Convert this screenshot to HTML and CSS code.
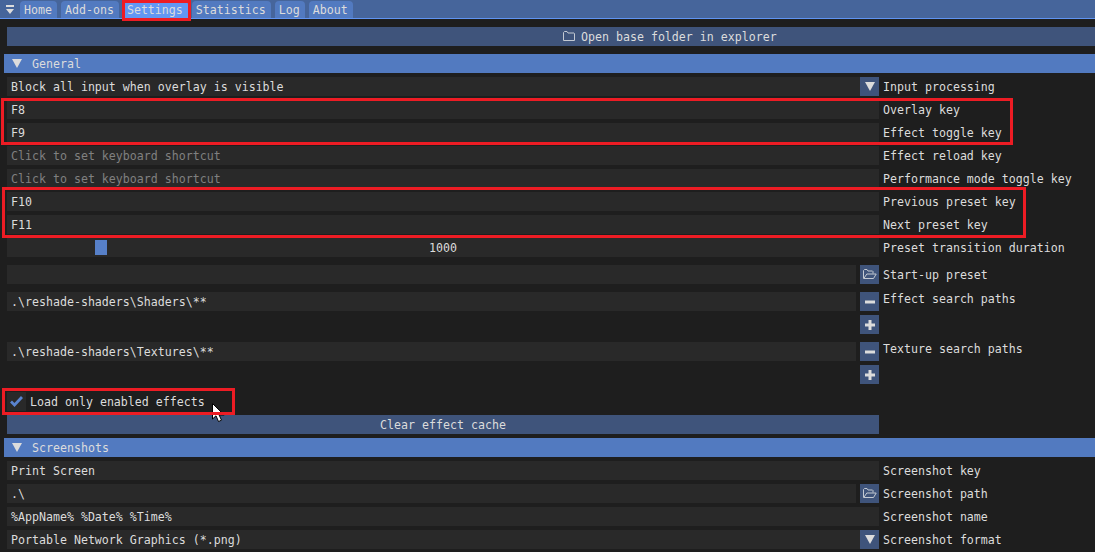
FILE: index.html
```html
<!DOCTYPE html>
<html lang="en">
<head>
    <meta charset="UTF-8">
    <title>Settings</title>
    <link rel="stylesheet" href="styles.css">
</head>
<body>

    <svg width="0" height="0" class="symbols">
        <symbol id="arrow" viewBox="0 0 10 9"><path d="M0 0h10L5 9z" fill="#dcdcdc"/></symbol>
        <symbol id="folder" viewBox="0 0 12 11"><path d="M.5 9.5v-8l1-1h2.500l1 1.500h6l.5.5v7z" fill="none" stroke="#c3c9d2"/></symbol>
        <symbol id="folder-open" viewBox="0 0 14 11"><path d="M.5 9.500V1.500l1-1h2.500l1 1.500h4.500l.5.5v2M.8 9.500l3-4.500h9.400l-2.700 4.500z" fill="none" stroke="#c3c9d2"/></symbol>
        <symbol id="minus" viewBox="0 0 10 10"><path d="M0 3.500h10v3H0z" fill="#dcdcdc"/></symbol>
        <symbol id="plus" viewBox="0 0 10 10"><path d="M3.500 0h3v3.500H10v3H6.500V10h-3V6.500H0v-3h3.500z" fill="#dcdcdc"/></symbol>
    </svg>

    <div class="tabbar">
        <svg class="tab-list" width="8" height="10" viewBox="0 0 8 10"><path d="M0 0h8v2H0zM0 4h8L4 9z" fill="#dcdcdc"/></svg>
        <div class="tab">Home</div>
        <div class="tab">Add-ons</div>
        <div class="tab active">Settings<div class="mark mark-tab"></div></div>
        <div class="tab">Statistics</div>
        <div class="tab">Log</div>
        <div class="tab">About</div>
    </div>

    <div class="panel">
        <div class="btn btn-wide"><svg width="12" height="11"><use href="#folder"/></svg>Open base folder in explorer</div>

        <div class="header"><svg width="10" height="9"><use href="#arrow"/></svg>General</div>

        <div class="row"><div class="field">Block all input when overlay is visible</div><div class="icon-btn joined"><svg width="10" height="9"><use href="#arrow"/></svg></div><label>Input processing</label></div>
        <div class="group">
            <div class="row"><div class="field">F8</div><label>Overlay key</label></div>
            <div class="row"><div class="field">F9</div><label>Effect toggle key</label></div>
            <div class="mark mark-toggle"></div>
        </div>
        <div class="row"><div class="field hint">Click to set keyboard shortcut</div><label>Effect reload key</label></div>
        <div class="row"><div class="field hint">Click to set keyboard shortcut</div><label>Performance mode toggle key</label></div>
        <div class="group">
            <div class="row"><div class="field">F10</div><label>Previous preset key</label></div>
            <div class="row"><div class="field">F11</div><label>Next preset key</label></div>
            <div class="mark mark-preset"></div>
        </div>
        <div class="row"><div class="field slider"><div class="grab"></div>1000</div><label>Preset transition duration</label></div>

        <div class="row spaced"><div class="field"></div><div class="icon-btn"><svg width="14" height="11"><use href="#folder-open"/></svg></div><label>Start-up preset</label></div>

        <div class="row spaced"><div class="field">.\reshade-shaders\Shaders\**</div><div class="icon-btn"><svg width="10" height="10"><use href="#minus"/></svg></div><label class="top">Effect search paths</label></div>
        <div class="row add"><div class="icon-btn"><svg width="10" height="10"><use href="#plus"/></svg></div></div>

        <div class="row spaced"><div class="field">.\reshade-shaders\Textures\**</div><div class="icon-btn"><svg width="10" height="10"><use href="#minus"/></svg></div><label class="top">Texture search paths</label></div>
        <div class="row add"><div class="icon-btn"><svg width="10" height="10"><use href="#plus"/></svg></div></div>

        <div class="row spaced check-row">
            <div class="checkbox"><svg width="13" height="11" viewBox="0 0 13 11"><path d="M1 5.500L4.500 9 12 1" fill="none" stroke="#5983cf" stroke-width="2.800"/></svg></div>
            <span>Load only enabled effects</span>
            <svg class="cursor" width="15" height="21" viewBox="0 0 15 21"><path d="M.5.5v15.500l3.500-3.200 2.500 5.700 3-1.300-2.400-5.200h5z" fill="#fff" stroke="#000"/></svg>
            <div class="mark mark-check"></div>
        </div>
        <div class="row"><div class="btn">Clear effect cache</div></div>

        <div class="header header-next"><svg width="10" height="9"><use href="#arrow"/></svg>Screenshots</div>

        <div class="row"><div class="field">Print Screen</div><label>Screenshot key</label></div>
        <div class="row"><div class="field">.\</div><div class="icon-btn"><svg width="14" height="11"><use href="#folder-open"/></svg></div><label>Screenshot path</label></div>
        <div class="row"><div class="field">%AppName% %Date% %Time%</div><label>Screenshot name</label></div>
        <div class="row"><div class="field">Portable Network Graphics (*.png)</div><div class="icon-btn joined"><svg width="10" height="9"><use href="#arrow"/></svg></div><label>Screenshot format</label></div>
    </div>

</body>
</html>
```

FILE: styles.css
```css
body {
    margin: 0;
    height: 552px;
    overflow: hidden;
    background-color: #1e1e1e;
    color: #dcdcdc;
    font-family: "DejaVu Sans Mono", monospace;
    font-size: 11.627px;
    line-height: 21px;
    white-space: nowrap;
}
.symbols {
    position: absolute;
}
svg {
    flex-shrink: 0;
    align-self: center;
}
.tabbar {
    display: flex;
    gap: 4px;
    height: 18px;
    padding-left: 6px;
    background-color: #46659b;
    border-bottom: 1px solid #6094f2;
}
.tab-list {
    align-self: flex-start;
    margin: 5px 2px 0 0;
}
.tab {
    position: relative;
    margin-top: 1px;
    padding: 0 5px 0 4px;
    line-height: 18px;
    background-color: #527ac0;
    border-radius: 4px 4px 0 0;
}
.tab.active {
    background-color: #6297f4;
}
.panel {
    display: flex;
    flex-direction: column;
    gap: 4px;
    padding: 8px 0 0 7px;
}
.btn {
    display: flex;
    justify-content: center;
    width: 872px;
    height: 19px;
    background-color: #3f547b;
}
/* label sits right of centre, the button runs to the window edge */
.btn-wide {
    box-sizing: border-box;
    width: auto;
    padding-left: 556px;
    justify-content: flex-start;
    gap: 6px;
}
.header {
    display: flex;
    gap: 10px;
    height: 19px;
    margin: 4px 0 0 -3px;
    padding-left: 8px;
    background-color: #527ac0;
}
.header-next {
    margin-top: 0;
}
.row {
    display: flex;
    height: 19px;
}
.group {
    display: flex;
    flex-direction: column;
    gap: 4px;
    position: relative;
}
.spaced {
    margin-top: 4px;
}
.field {
    flex: 1;
    padding-left: 4px;
    background-color: #292929;
}
.hint {
    color: #808080;
}
/* labels fill the column right of the 872px wide fields */
label {
    width: 212px;
    padding-left: 4px;
}
label.top {
    line-height: 15px;
}
.icon-btn {
    display: flex;
    justify-content: center;
    width: 19px;
    margin-left: 4px;
    background-color: #3f547b;
}
.icon-btn.joined {
    margin-left: 0;
}
.add .icon-btn {
    margin-left: 853px;
}
.slider {
    position: relative;
    padding-left: 0;
    text-align: center;
}
.grab {
    position: absolute;
    left: 88px;
    top: 2px;
    width: 12px;
    height: 15px;
    background-color: #5780c8;
}
.check-row {
    position: relative;
    gap: 4px;
}
.checkbox {
    display: flex;
    justify-content: center;
    width: 19px;
    background-color: #292929;
}
.cursor {
    position: absolute;
    left: 205px;
    top: 11px;
    z-index: 1;
}
/* red callouts */
.mark {
    position: absolute;
    box-sizing: border-box;
    border: 3px solid #ed1c24;
    z-index: 2;
}
.mark-tab {
    left: -1px;
    top: -1px;
    width: 69px;
    height: 21px;
}
.mark-toggle {
    left: -6px;
    top: -2px;
    width: 1012px;
    height: 47px;
}
.mark-preset {
    left: -5px;
    top: -5px;
    width: 1024px;
    height: 51px;
}
.mark-check {
    left: -5px;
    top: -4px;
    width: 233px;
    height: 27px;
}
```
